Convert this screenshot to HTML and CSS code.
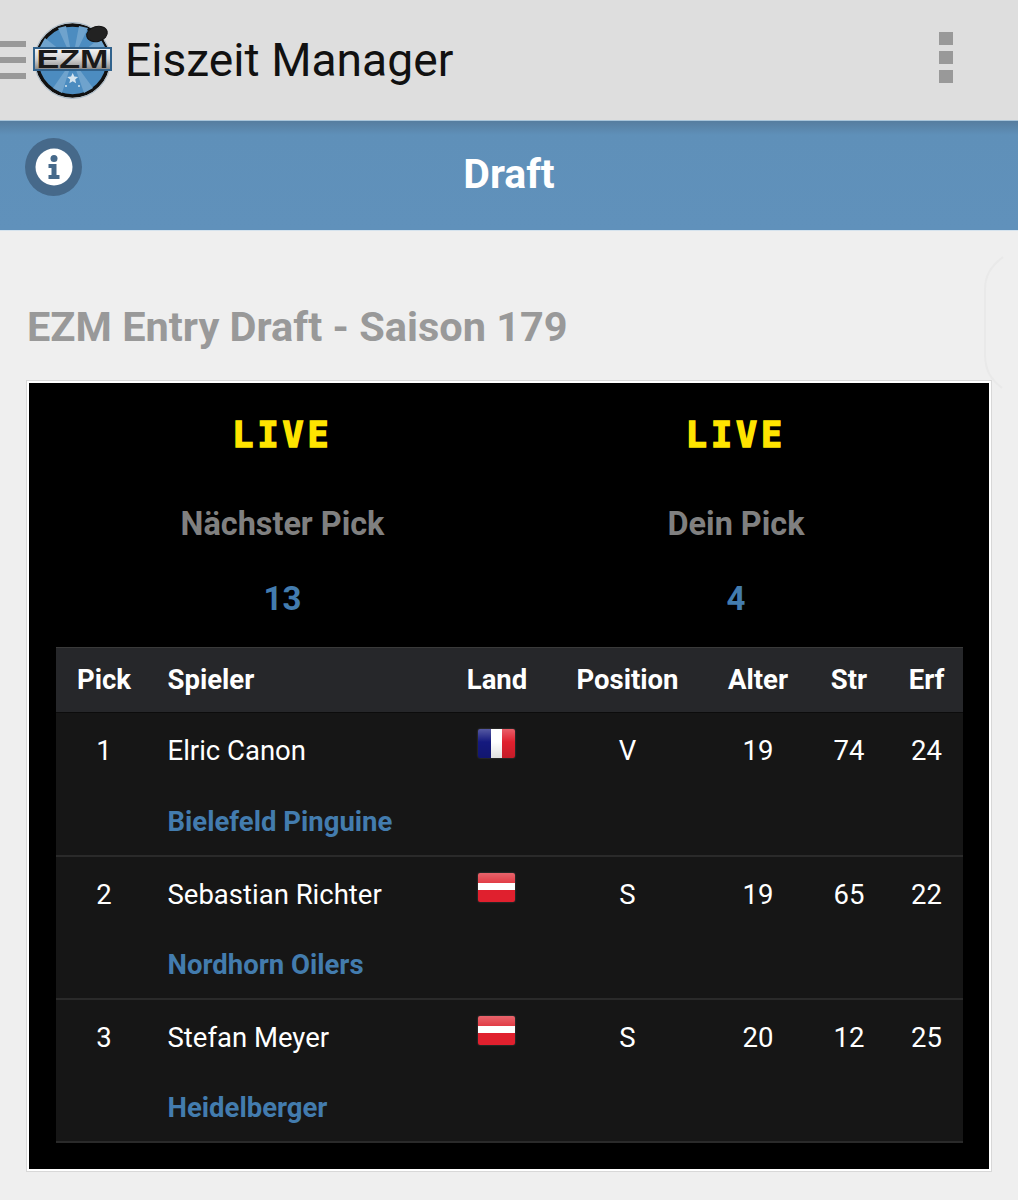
FILE: index.html
```html
<!DOCTYPE html>
<html lang="de">
<head>
<meta charset="utf-8">
<title>Eiszeit Manager</title>
<link rel="stylesheet" href="styles.css">
</head>
<body>
<header class="topbar">
  <div class="burger"><span></span><span></span><span></span></div>
  <svg class="logo" width="82" height="80" viewBox="0 0 82 80">
    <defs>
      <linearGradient id="plate" x1="0" y1="0" x2="0" y2="1">
        <stop offset="0" stop-color="#f4f4f4"/><stop offset="0.5" stop-color="#d2d2d2"/><stop offset="1" stop-color="#8c8c8c"/>
      </linearGradient>
    </defs>
    <circle cx="40.500" cy="40.500" r="35.500" fill="#4c8cc0" stroke="#111" stroke-width="3.500"/>
    <circle cx="40.500" cy="40.500" r="38" fill="none" stroke="#a6b8c6" stroke-width="1"/>
    <path d="M40.500 40L26 8L34 6ZM40.500 40L47 6L56 8ZM40.500 40L68 18L73 27ZM40.500 40L8 27L13 18ZM40.500 40L30 73L21 68ZM40.500 40L52 73L61 68Z" fill="#6fa3cd"/>
    <rect x="1" y="27" width="79" height="24" fill="#31628c"/>
    <rect x="3" y="29" width="75" height="20" fill="url(#plate)"/>
    <text x="40.500" y="47.500" class="logo-text" text-anchor="middle" textLength="72" lengthAdjust="spacingAndGlyphs">EZM</text>
    <path d="M40.700 53l1.600 3.600 3.900.3-3 2.500.9 3.800-3.400-2-3.400 2 .9-3.800-3-2.500 3.900-.3z" fill="#d5e4ef"/>
    <circle cx="34" cy="66" r="1" fill="#d5e4ef"/><circle cx="47" cy="66" r="1" fill="#d5e4ef"/>
    <ellipse cx="65" cy="14" rx="10.500" ry="7.500" fill="#222" stroke="#111" transform="rotate(-15 65 14)"/>
  </svg>
  <div class="brand">Eiszeit Manager</div>
  <div class="kebab"><span></span><span></span><span></span></div>
</header>
<section class="band">
  <div class="info">
    <svg width="38" height="38" viewBox="0 0 38 38">
      <circle cx="19" cy="19" r="18.500" fill="#fff"/>
      <circle cx="19" cy="10.500" r="3.500" fill="#46698a"/>
      <path d="M13.500 16h8v11h3v4h-11v-4h3v-7h-3z" fill="#46698a"/>
    </svg>
  </div>
  <h1 class="band-title">Draft</h1>
</section>
<svg class="ghost" width="26" height="140" viewBox="0 0 26 140"><path d="M21 3C8 13 3 22 3 36V100C3 118 10 126 20 134" fill="none" stroke="#e9e9e9" stroke-width="2"/></svg>
<main class="content">
  <h2 class="heading">EZM Entry Draft - Saison 179</h2>
  <div class="card">
    <div class="summary">
      <div class="summary-col">
        <div class="live">LIVE</div>
        <div class="summary-label">Nächster Pick</div>
        <div class="summary-value">13</div>
      </div>
      <div class="summary-col">
        <div class="live">LIVE</div>
        <div class="summary-label">Dein Pick</div>
        <div class="summary-value">4</div>
      </div>
    </div>
    <table class="draft">
      <colgroup>
        <col class="c-pick"><col class="c-name"><col class="c-land"><col class="c-pos"><col class="c-age"><col class="c-str"><col class="c-erf">
      </colgroup>
      <thead>
        <tr><th>Pick</th><th class="left">Spieler</th><th>Land</th><th>Position</th><th>Alter</th><th>Str</th><th>Erf</th></tr>
      </thead>
      <tbody>
        <tr class="main-row"><td>1</td><td class="left">Elric Canon</td><td class="flag-cell"><span class="flag fr"></span></td><td>V</td><td>19</td><td>74</td><td>24</td></tr>
        <tr class="team-row"><td></td><td class="left team" colspan="6">Bielefeld Pinguine</td></tr>
        <tr class="main-row"><td>2</td><td class="left">Sebastian Richter</td><td class="flag-cell"><span class="flag at"></span></td><td>S</td><td>19</td><td>65</td><td>22</td></tr>
        <tr class="team-row"><td></td><td class="left team" colspan="6">Nordhorn Oilers</td></tr>
        <tr class="main-row"><td>3</td><td class="left">Stefan Meyer</td><td class="flag-cell"><span class="flag at"></span></td><td>S</td><td>20</td><td>12</td><td>25</td></tr>
        <tr class="team-row"><td></td><td class="left team" colspan="6">Heidelberger</td></tr>
      </tbody>
    </table>
  </div>
</main>
</body>
</html>
```
FILE: styles.css
```css
* { box-sizing: border-box; }
html, body { margin: 0; padding: 0; }
body {
  position: relative;
  height: 1200px;
  overflow: hidden;
  background: #efefef;
  font-family: Roboto, "Liberation Sans", sans-serif;
}
.topbar {
  height: 121px;
  display: flex;
  align-items: center;
  background: #dedede;
  border-bottom: 1px solid #a9c5da;
}
.burger {
  width: 26px;
  display: flex;
  flex-direction: column;
  gap: 10px;
  margin-right: 6px;
}
.burger span { display: block; height: 6px; background: #999; }
.logo { flex: none; margin-right: 11px; }
.logo-text {
  font-family: "Liberation Sans", sans-serif;
  font-weight: 700;
  font-size: 25px;
  fill: #1a1a1a;
}
.brand {
  flex: 1;
  font-size: 46.2px;
  line-height: 60px;
  color: #111;
}
.kebab {
  display: flex;
  flex-direction: column;
  gap: 6px;
  width: 14px;
  margin-right: 65px;
  margin-bottom: 5px;
}
.kebab span { display: block; height: 13px; background: #999; }
.band {
  position: relative;
  height: 110px;
  padding-bottom: 4px;
  background: linear-gradient(#567d9f 0, #5f90b9 14px, #6091bb 100%);
  border-bottom: 1px solid #d5e3ee;
  display: flex;
  align-items: center;
  justify-content: center;
}
.band-title {
  margin: 0;
  font-size: 41px;
  font-weight: 700;
  color: #fff;
}
.info {
  position: absolute;
  left: 25px;
  top: 17px;
  width: 57px;
  height: 58px;
  border-radius: 50%;
  background: #46698a;
  display: flex;
  align-items: center;
  justify-content: center;
}
.ghost { position: absolute; left: 982px; top: 254px; }
.content { padding: 0 27px; }
.heading {
  margin: 71px 0 29px;
  font-size: 41.5px;
  line-height: 50px;
  font-weight: 700;
  color: #999;
}
.card {
  width: 964px;
  height: 790px;
  padding: 0 27px;
  background: #000;
  border: 2px solid #fff;
  outline: 1px solid #d8d8d8;
}
.summary {
  display: grid;
  grid-template-columns: 453px 454px;
  height: 264px;
  text-align: center;
}
.summary-col { display: flex; flex-direction: column; align-items: center; }
.live {
  margin-top: 31px;
  height: 40px;
  font-family: "DejaVu Sans Mono", monospace;
  font-weight: 700;
  font-size: 35px;
  line-height: 42px;
  letter-spacing: 4px;
  color: #ffe400;
  -webkit-text-stroke: 1.5px #ffe400;
}
.summary-label {
  margin-top: 48px;
  font-size: 32.4px;
  line-height: 44px;
  font-weight: 700;
  color: #808080;
}
.summary-value {
  margin-top: 31px;
  font-size: 33px;
  line-height: 44px;
  font-weight: 700;
  color: #437cae;
}
.draft {
  width: 907px;
  table-layout: fixed;
  border-collapse: collapse;
  color: #fff;
  font-size: 27.5px;
}
.c-pick { width: 96px; }
.c-name { width: 295px; }
.c-land { width: 100px; }
.c-pos { width: 161px; }
.c-age { width: 100px; }
.c-str { width: 82px; }
.c-erf { width: 73px; }
.draft th {
  height: 65px;
  padding: 0 0 2px;
  text-align: center;
  font-weight: 700;
  background: #26272a;
  border-top: 1px solid #3a3a3a;
  border-bottom: 1px solid #0c0c0c;
}
.draft td {
  padding: 0;
  text-align: center;
  background: #161616;
}
.draft .left { text-align: left; padding-left: 15.5px; }
.main-row td { height: 78px; padding-bottom: 2px; }
.team-row td { height: 65px; padding-bottom: 2px; border-bottom: 2px solid #2a2a2a; }
.draft .team { font-weight: 700; color: #437cae; }
.draft .flag-cell { vertical-align: top; padding-top: 16px; }
.flag {
  display: block;
  width: 37px;
  height: 29px;
  margin-left: 31px;
  border-radius: 2px;
  box-shadow: 0 0 2px rgba(255, 255, 255, 0.25);
}
.flag.fr {
  background:
    linear-gradient(rgba(255, 255, 255, 0.28), rgba(255, 255, 255, 0) 45%, rgba(0, 0, 0, 0.12)),
    linear-gradient(90deg, #14197e 0 36%, #fff 36% 64%, #e0202e 64% 100%);
}
.flag.at {
  background:
    linear-gradient(rgba(255, 255, 255, 0.25), rgba(255, 255, 255, 0) 45%),
    linear-gradient(#e0303a 0 33%, #fff 33% 60%, #e0202e 60% 100%);
}
```
